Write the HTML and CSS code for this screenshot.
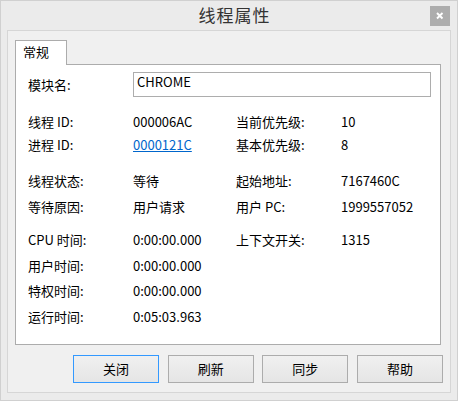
FILE: index.html
```html
<!DOCTYPE html>
<html lang="zh-CN">
<head>
<meta charset="utf-8">
<title>线程属性</title>
<link rel="stylesheet" href="styles.css">
</head>
<body>
<div class="window">
  <div class="titlebar">
    <span class="title">线程属性</span>
    <button class="close" aria-label="关闭">
      <svg width="20" height="20" viewBox="0 0 20 20"><path d="M7 7 L12.5 12.5 M12.5 7 L7 12.5" stroke="#fff" stroke-width="1.9" fill="none"/></svg>
    </button>
  </div>
  <div class="client">
    <div class="tabs">
      <div class="tab">常规</div>
      <div class="tabfill"></div>
    </div>
    <div class="panel">
      <div class="namerow">
        <span class="lbl">模块名:</span>
        <div class="textbox">CHROME</div>
      </div>
      <div class="grid g1">
        <span>线程 ID:</span><span>000006AC</span><span>当前优先级:</span><span>10</span>
        <span>进程 ID:</span><span><a class="link" href="#">0000121C</a></span><span>基本优先级:</span><span>8</span>
      </div>
      <div class="grid g2">
        <span>线程状态:</span><span>等待</span><span>起始地址:</span><span>7167460C</span>
        <span>等待原因:</span><span>用户请求</span><span>用户 PC:</span><span>1999557052</span>
      </div>
      <div class="grid g3">
        <span>CPU 时间:</span><span>0:00:00.000</span><span>上下文开关:</span><span>1315</span>
        <span>用户时间:</span><span>0:00:00.000</span><span></span><span></span>
        <span>特权时间:</span><span>0:00:00.000</span><span></span><span></span>
        <span>运行时间:</span><span>0:05:03.963</span><span></span><span></span>
      </div>
    </div>
    <div class="buttons">
      <button class="btn default">关闭</button>
      <button class="btn">刷新</button>
      <button class="btn">同步</button>
      <button class="btn">帮助</button>
    </div>
  </div>
</div>
</body>
</html>
```

FILE: styles.css
```css
html, body {
  margin: 0;
  padding: 0;
  background: #ebebeb;
}
body {
  font-family: "Noto Sans CJK SC", "Noto Sans", sans-serif;
  font-size: 13px;
  color: #000;
}
.window {
  width: 458px;
  height: 401px;
  box-sizing: border-box;
  border: 1px solid #d0d0d0;
  background: #ebebeb;
  display: flex;
  flex-direction: column;
}
.titlebar {
  height: 29px;
  display: flex;
  align-items: flex-start;
  flex: none;
}
.title {
  flex: 1;
  text-align: center;
  padding-left: 38px;
  font-size: 17px;
  letter-spacing: 1px;
  line-height: 27px;
  color: #333;
}
.close {
  width: 20px;
  height: 20px;
  margin: 5px 7px 0 0;
  padding: 0;
  border: none;
  background: #adadad;
  display: block;
}
.close svg {
  display: block;
}
.client {
  height: 363px;
  box-sizing: border-box;
  margin: 0 6px 7px 6px;
  border: 1px solid #d6d6d6;
  background: #f0f0f0;
  padding: 9px 7px 9px 7px;
  display: flex;
  flex-direction: column;
}
.tabs {
  display: flex;
  height: 25px;
  margin-right: 2px;
  flex: none;
}
.tab {
  width: 52px;
  height: 25px;
  box-sizing: border-box;
  border: 1px solid #acacac;
  border-bottom: none;
  background: #fff;
  padding-left: 7px;
  line-height: 21px;
}
.tabfill {
  flex: 1;
  height: 25px;
  box-sizing: border-box;
  border-bottom: 1px solid #acacac;
}
.panel {
  flex: 1;
  margin-right: 2px;
  background: #fff;
  border: 1px solid #acacac;
  border-top: none;
  padding: 7px 9px 0 12px;
}
.namerow {
  display: grid;
  grid-template-columns: 105px 1fr;
  height: 25px;
  line-height: 25px;
}
.textbox {
  height: 25px;
  box-sizing: border-box;
  border: 1px solid #adadad;
  line-height: 18px;
  padding-left: 3px;
  background: #fff;
}
.grid {
  display: grid;
  grid-template-columns: 105px 103px 105px 1fr;
}
.g1 {
  margin-top: 13px;
  grid-auto-rows: 23px;
  line-height: 23px;
}
.g2 {
  margin-top: 12px;
  grid-auto-rows: 26px;
  line-height: 26px;
}
.g3 {
  margin-top: 7px;
  grid-auto-rows: 25.5px;
  line-height: 25.5px;
}
.link {
  color: #0066cc;
  text-decoration: underline;
}
.buttons {
  display: flex;
  justify-content: flex-end;
  gap: 8.67px;
  margin-top: 10px;
  flex: none;
}
.btn {
  width: 86px;
  height: 28px;
  box-sizing: border-box;
  border: 1px solid #acacac;
  background: linear-gradient(#f0f0f0, #e5e5e5);
  font-family: inherit;
  font-size: 13px;
  line-height: 26px;
  color: #000;
  padding: 0;
}
.btn.default {
  border-color: #3399ff;
}
```
